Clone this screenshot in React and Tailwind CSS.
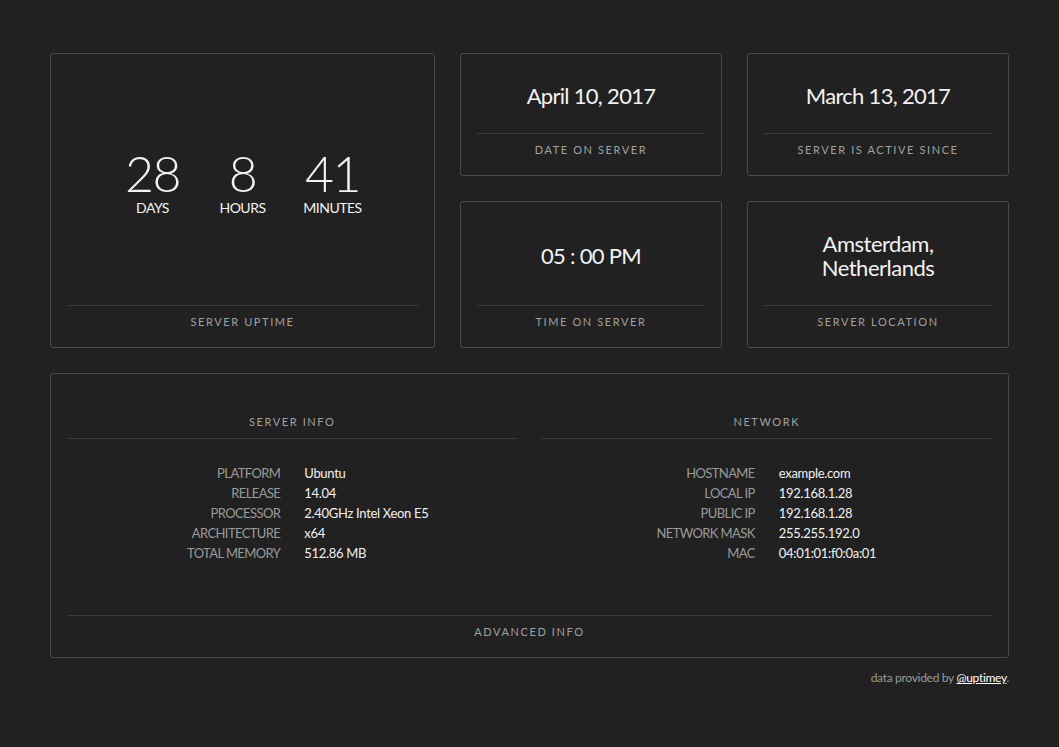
const font = { fontFamily: "Lato, 'Open Sans', sans-serif" };

function Card({ label, className = "", children }) {
  return (
    <div className={`flex flex-col rounded-[3px] border border-[#4a4a4a] px-4 ${className}`}>
      <div className="flex flex-1 items-center justify-center">{children}</div>
      <div className="h-[42px] border-t border-[#3a3a3a] pt-[8px] text-center text-[11px] leading-4 tracking-[1.6px] text-[#a0a0a0] uppercase">
        {label}
      </div>
    </div>
  );
}

const serverInfo = [
  ["Platform", "Ubuntu"],
  ["Release", "14.04"],
  ["Processor", "2.40GHz Intel Xeon E5"],
  ["Architecture", "x64"],
  ["Total Memory", "512.86 MB"],
];

const network = [
  ["Hostname", "example.com"],
  ["Local IP", "192.168.1.28"],
  ["Public IP", "192.168.1.28"],
  ["Network Mask", "255.255.192.0"],
  ["MAC", "04:01:01:f0:0a:01"],
];

function InfoTable({ title, rows }) {
  return (
    <div>
      <div className="border-b border-[#3a3a3a] pb-2 text-center text-[11px] leading-4 tracking-[1.6px] text-[#a0a0a0] uppercase">
        {title}
      </div>
      <div className="mt-6">
        {rows.map(([k, v]) => (
          <div key={k} className="flex text-[13px] leading-5">
            <div className="w-1/2 pr-3 text-right text-[#9a9a9a] uppercase tracking-[-0.6px]">{k}</div>
            <div className="w-1/2 pl-3 text-[#f0f0f0] tracking-[-0.3px]">{v}</div>
          </div>
        ))}
      </div>
    </div>
  );
}

export default function App() {
  return (
    <div className="min-h-[747px] bg-[#212121] px-[50px] pt-[53px] text-white" style={font}>
      <div className="grid grid-cols-[385px_262px_262px] grid-rows-[123px_147px] gap-[25px]">
        <Card label="Server Uptime" className="row-span-2">
          <div className="mt-[10px] flex">
            {[["28", "Days"], ["8", "Hours"], ["41", "Minutes"]].map(([n, l]) => (
              <div key={l} className="flex w-[90px] flex-col items-center">
                <div className="text-[50px] leading-[44px] font-light tracking-[-1.5px] text-[#f2f2f2]">{n}</div>
                <div className="mt-[3px] text-[14px] leading-5 uppercase tracking-[-0.5px] text-[#f2f2f2]">{l}</div>
              </div>
            ))}
          </div>
        </Card>
        <Card label="Date on Server">
          <div className="mt-1 text-[22px] tracking-[-0.7px] text-[#f2f2f2]">April 10, 2017</div>
        </Card>
        <Card label="Server is active since">
          <div className="mt-1 text-[22px] tracking-[-0.7px] text-[#f2f2f2]">March 13, 2017</div>
        </Card>
        <Card label="Time on Server">
          <div className="mt-1 text-[22px] tracking-[-0.7px] text-[#f2f2f2]">05 : 00 PM</div>
        </Card>
        <Card label="Server Location">
          <div className="mt-1 text-center text-[22px] leading-6 tracking-[-0.5px] text-[#f2f2f2]">
            Amsterdam,
            <br />
            Netherlands
          </div>
        </Card>
      </div>

      <div className="mt-[25px] flex h-[285px] flex-col rounded-[3px] border border-[#4a4a4a] px-4">
        <div className="grid flex-1 grid-cols-2 gap-6 pt-10">
          <InfoTable title="Server Info" rows={serverInfo} />
          <InfoTable title="Network" rows={network} />
        </div>
        <div className="h-[42px] border-t border-[#3a3a3a] pt-[8px] text-center text-[11px] leading-4 tracking-[1.6px] text-[#a0a0a0] uppercase">
          Advanced Info
        </div>
      </div>

      <div className="mt-[12px] text-right text-[12px] leading-4 tracking-[-0.3px] text-[#9a9a9a]">
        data provided by{" "}
        <a className="text-white underline" href="#">
          @uptimey
        </a>
        .
      </div>
    </div>
  );
}
